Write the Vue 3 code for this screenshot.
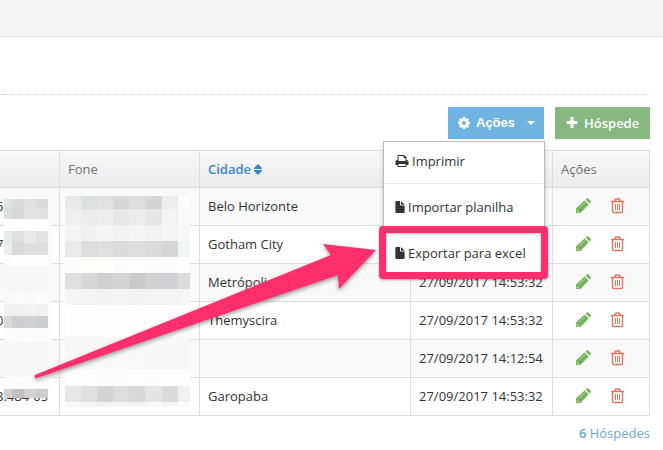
<script setup>
import { ref } from 'vue';

const menuOpen = ref(true); // dropdown state

const guests = [
    { doc: '6', city: 'Belo Horizonte', date: '27/09/2017 14:53:32' },
    { doc: '7', city: 'Gotham City', date: '27/09/2017 14:53:32' },
    { doc: '', city: 'Metrópolis', date: '27/09/2017 14:53:32' },
    { doc: '0', city: 'Themyscira', date: '27/09/2017 14:53:32' },
    { doc: '', city: '', date: '27/09/2017 14:12:54' },
    { doc: '8.484-05', city: 'Garopaba', date: '27/09/2017 14:53:32' },
];

// each band: [y, height, grey of every tile]
const docBands = [
    [49, 8, ['#e1e4e3', '#d9dadf', '#dfdfdf', '#dadada', '#f9f9f9']],
    [57, 12, ['#dddfdb', '#d8d8d8', '#e1e1e1', '#e0e0e0', '#f9f9f9']],
    [69, 12, ['#fff', '#fff', '#fff', '#fff', '#fafafa']],
    [81, 12, ['#e8ebea', '#dfdfdf', '#e9e9e9', '#e2e2e2', '#fafafa']],
    [93, 12, ['#ebeded', '#d9d9d9', '#dfdfdf', '#dfdfdf', '#fafafa']],
    [105, 12, ['#fdfdfd', '#fefefe', '#fefefe', '#fefefe', '#fafafa']],
    [117, 25, ['#f8f8f8', '#f8f8f8', '#f8f8f8', '#f8f8f8', '#f9f9f9']],
    [142, 12, ['#f9f9f9', '#fbfbfb', '#fafafa', '#fcfcfc', '#fafafa']],
    [154, 12, ['#f2f2f2', '#f0f0f0', '#f2f2f2', '#f1f1f1', '#fdfdfd']],
    [166, 12, ['#dadada', '#cccdcf', '#d1d1d1', '#cccdcf', '#fdfdfd']],
    [178, 13, ['#fdfdfd', '#fbfbfb', '#fcfcfc', '#fbfbfb', '#fdfdfd']],
    [191, 36, ['#f8f8f8', '#f8f8f8', '#f8f8f8', '#f8f8f8', '#f9f9f9']],
    [227, 12, ['#fdfdfd', '#fcfcfc', '#fcfcfc', '#fbfbfb', '#fdfdfd']],
    [239, 9, ['#d1d1d1', '#c0c0c0', '#d2d2d2', '#cdcdcd', '#fefefe']],
];

const phoneBands = [
    [46, 13, ['#e9e9e9', '#dde0df', '#e1e1e1', '#d7d7d7', '#dedede', '#d5d5d5', '#ededed', '#fdfdfd']],
    [59, 16, ['#f0f0f0', '#ebebeb', '#ededed', '#e7e7e7', '#ececec', '#e6e6e6', '#f4f4f4', '#fafafa']],
    [75, 16, ['#f4f4f4', '#f1f1f1', '#f5f5f5', '#f2f2f2', '#f5f5f5', '#f2f2f2', '#f5f5f5', '#f8f8f8']],
    [91, 16, ['#eaeaea', '#dddddd', '#dfdfdf', '#dadada', '#dedede', '#dadada', '#d6d6d6', '#f2f5f4']],
    [107, 16, ['#fcfcfc', '#fdfdfc', '#fefefd', '#fcfcfc', '#fdfdfd', '#fcfcfc', '#fcfcfc', '#fdfdfd']],
    [123, 16, ['#e0e0e0', '#d7d7d7', '#d0d0d0', '#d5d5d5', '#cacaca', '#d1d1d1', '#d0d0d4', '#dcdcdc']],
    [139, 16, ['#f5f5f5', '#f4f4f4', '#f3f3f3', '#f4f4f4', '#f3f3f3', '#f4f4f4', '#f4f4f4', '#f5f5f5']],
    [155, 32, ['#fefefe', '#fefefe', '#fefefe', '#fdfdfd', '#fefefe', '#fefefe', '#fefefe', '#fefefe']],
    [187, 17, ['#f8f8f8', '#f8f8f8', '#f8f8f8', '#f8f8f8', '#f8f8f8', '#f8f8f8', '#f8f8f8', '#f8f8f8']],
    [204, 16, ['#f9f9f9', '#f9f9f9', '#f9f9f9', '#f9f9f9', '#f9f9f9', '#f8f8f8', '#f8f8f8', '#f8f8f8']],
    [220, 16, ['#fdfdfd', '#fdfdfd', '#fcfcfc', '#fcfcfc', '#fdfdfd', '#fcfcfc', '#fdfdfd', '#fdfdfd']],
    [236, 16, ['#e7e7e7', '#dfdfdf', '#d4d4d4', '#dddddd', '#d8d8d8', '#e4e4e4', '#dadada', '#f0f0f0']],
    [252, 5, ['#f8f8f8', '#f5f5f5', '#f3f3f3', '#f6f6f6', '#f4f4f4', '#f8f8f8', '#f5f5f5', '#fbfbfb']],
];

const docTiles = toTiles(docBands, [4, 12, 24, 36, 48, 52]);
const phoneTiles = toTiles(phoneBands, [65, 81, 97, 113, 129, 145, 162, 178, 190]);

function toTiles(bands, edges) {
    return bands.flatMap(([y, height, fills]) =>
        fills.map((fill, i) => ({ x: edges[i], y, width: edges[i + 1] - edges[i], height, fill }))
    );
}
</script>

<template>
    <div class="page">
        <header class="topbar"></header>
        <main class="content">
            <!-- action buttons -->
            <div class="toolbar">
                <div class="dropdown">
                    <button type="button" class="btn btn-actions" :aria-expanded="menuOpen" @click="menuOpen = !menuOpen">
                        <svg class="icon" viewBox="0 0 1792 1792"><path d="M1152 896q0-106-75-181t-181-75-181 75-75 181 75 181 181 75 181-75 75-181zm512-109v222q0 12-8 23t-20 13l-185 28q-19 54-39 91 35 50 107 138 10 12 10 25t-9 23q-27 37-99 108t-94 71q-12 0-26-9l-138-108q-44 23-91 38-16 136-29 186-7 28-36 28h-222q-14 0-24.5-8.5t-11.5-21.5l-28-184q-49-16-90-37l-141 107q-10 9-25 9-14 0-25-11-126-114-165-168-7-10-7-23 0-12 8-23 15-21 51-66.5t54-70.5q-27-50-41-99l-183-27q-13-2-21-12.5t-8-23.5v-222q0-12 8-23t19-13l186-28q14-46 39-92-40-57-107-138-10-12-10-24 0-10 9-23 26-36 98.5-107.5t94.5-71.5q13 0 26 10l138 107q44-23 91-38 16-136 29-186 7-28 36-28h222q14 0 24.5 8.5t11.5 21.5l28 184q49 16 90 37l142-107q9-9 24-9 13 0 25 10 129 119 165 170 7 8 7 22 0 12-8 23-15 21-51 66.5t-54 70.5q26 50 41 98l183 28q13 2 21 12.5t8 23.5z" /></svg>
                        <span>Ações</span>
                        <span class="caret"></span>
                    </button>
                    <ul v-if="menuOpen" class="menu">
                        <li>
                            <a href="#">
                                <svg class="icon" viewBox="0 0 1792 1792"><path d="M448 1536h896v-256h-896v256zm0-640h896v-384h-160q-40 0-68-28t-28-68v-160h-640v640zm1152 64q0-26-19-45t-45-19-45 19-19 45 19 45 45 19 45-19 19-45zm128 0v416q0 13-9.5 22.5t-22.5 9.5h-224v160q0 40-28 68t-68 28h-960q-40 0-68-28t-28-68v-160h-224q-13 0-22.5-9.5t-9.5-22.5v-416q0-79 56.5-135.5t135.5-56.5h64v-544q0-40 28-68t68-28h672q40 0 88 20t76 48l152 152q28 28 48 76t20 88v256h64q79 0 135.5 56.5t56.5 135.5z" /></svg>
                                <span>Imprimir</span>
                            </a>
                        </li>
                        <li>
                            <a href="#">
                                <svg class="icon icon-file" viewBox="0 0 10 13"><path d="M0 1Q0 0 1 0H5V4Q5 5 6 5H10V12Q10 13 9 13H1Q0 13 0 12ZM6 0L10 4H6Z" /></svg>
                                <span>Importar planilha</span>
                            </a>
                        </li>
                        <li class="marked">
                            <a href="#">
                                <svg class="icon icon-file" viewBox="0 0 10 13"><path d="M0 1Q0 0 1 0H5V4Q5 5 6 5H10V12Q10 13 9 13H1Q0 13 0 12ZM6 0L10 4H6Z" /></svg>
                                <span>Exportar para excel</span>
                            </a>
                        </li>
                    </ul>
                </div>
                <button type="button" class="btn btn-add">
                    <svg class="icon" viewBox="0 0 1792 1792"><path d="M1600 736v192q0 40-28 68t-68 28h-416v416q0 40-28 68t-68 28h-192q-40 0-68-28t-28-68v-416h-416q-40 0-68-28t-28-68v-192q0-40 28-68t68-28h416v-416q0-40 28-68t68-28h192q40 0 68 28t28 68v416h416q40 0 68 28t28 68z" /></svg>
                    <span>Hóspede</span>
                </button>
            </div>

            <!-- guest list -->
            <div class="list">
                <table>
                    <colgroup>
                        <col class="col-doc" />
                        <col class="col-phone" />
                        <col />
                        <col class="col-date" />
                        <col class="col-actions" />
                    </colgroup>
                    <thead>
                        <tr>
                            <th></th>
                            <th>Fone</th>
                            <th>
                                <a href="#" class="sort">
                                    <span>Cidade</span>
                                    <svg viewBox="0 0 8 11"><path d="M4 0L8 4V5H0V4ZM0 6H8V7L4 11L0 7Z" /></svg>
                                </a>
                            </th>
                            <th></th>
                            <th>Ações</th>
                        </tr>
                    </thead>
                    <tbody>
                        <tr v-for="(guest, i) in guests" :key="i">
                            <td class="doc">{{ guest.doc }}</td>
                            <td></td>
                            <td>{{ guest.city }}</td>
                            <td>{{ guest.date }}</td>
                            <td>
                                <div class="row-actions">
                                    <button type="button" aria-label="Editar">
                                        <svg class="edit" viewBox="0 0 15 15">
                                            <path d="M0 15V10.6L8.6 2.4L12.6 6.4L4.4 15ZM9.6 1.5L10.7 0.5Q11.5 -0.2 12.3 0.5L14.5 2.7Q15.2 3.5 14.5 4.3L13.5 5.4Z" />
                                            <path class="shine" d="M3.2 10L9 4.4M1.2 11.8V13.8H3.2" />
                                        </svg>
                                    </button>
                                    <button type="button" aria-label="Excluir">
                                        <svg class="remove" viewBox="0 0 13 16">
                                            <path d="M0 3.5H13M3.5 3L4.2 1.5Q4.5 1 5 1H8Q8.5 1 8.8 1.5L9.5 3M1.5 4V13.5Q1.5 14.5 2.7 14.5H10.3Q11.5 14.5 11.5 13.5V4" />
                                            <path class="bars" d="M4.5 6V12M6.5 6V12M8.5 6V12" />
                                        </svg>
                                    </button>
                                </div>
                            </td>
                        </tr>
                    </tbody>
                </table>

                <!-- pixelated private data -->
                <svg class="mosaic" width="200" height="270" shape-rendering="crispEdges" aria-hidden="true">
                    <rect x="63" y="46" width="2" height="211" fill="#fbfbfb" />
                    <rect v-for="(tile, i) in docTiles" :key="'d' + i" v-bind="tile" />
                    <rect v-for="(tile, i) in phoneTiles" :key="'p' + i" v-bind="tile" />
                </svg>

                <!-- arrow to the export item -->
                <svg class="arrow" width="350" height="150" viewBox="30 240 350 150" aria-hidden="true">
                    <path d="M35 375L331 255L323 244L376 250L339 289L338 275L37 378Q34 379 35 375Z" />
                </svg>
            </div>
            <p class="total"><a href="#"><b>6</b> Hóspedes</a></p>
        </main>
    </div>
</template>

<style scoped>
.page {
    font-family: "Open Sans", "Noto Sans", sans-serif;
    font-size: 13px;
    line-height: 20px;
    color: #333;
    overflow: hidden;
}

a {
    color: inherit;
    text-decoration: none;
}

button {
    font: inherit;
    border: 0;
    cursor: pointer;
}

.icon {
    width: 14px;
    height: 14px;
    fill: currentColor;
    flex: none;
}

.topbar {
    height: 36px;
    background: #f4f4f4;
    border-bottom: 1px solid #e2e2e2;
}

.content {
    padding: 57px 13px 0 0;
}

.toolbar {
    display: flex;
    justify-content: flex-end;
    gap: 11px;
    padding: 12px 0 11px;
    border-top: 1px dotted #d8d8d8;
}

.btn {
    display: flex;
    align-items: center;
    gap: 5px;
    height: 32px;
    padding: 0 10px;
    color: #fff;
    font-weight: 600;
}

.btn-actions {
    width: 96px;
    padding: 0 9px;
    font-family: "Liberation Sans", Arial, sans-serif;
    font-weight: 700;
    background: #6fb3e0;
}

.btn-add {
    width: 95px;
    background: #87b87f;
}

.caret {
    margin-left: auto;
    border: 4px solid transparent;
    border-top-color: #fff;
    border-bottom: 0;
}

.dropdown {
    position: relative;
}

.menu {
    position: absolute;
    z-index: 2;
    top: 34px;
    right: -1px;
    box-sizing: border-box;
    width: 162px;
    margin: 0;
    padding: 0 1px;
    list-style: none;
    background: #fff;
    border: 1px solid #bbb;
    box-shadow: 0 2px 4px rgba(0, 0, 0, 0.2);
}

.menu li + li {
    border-top: 1px solid #e5e5e5;
}

.menu a {
    display: flex;
    align-items: center;
    gap: 3px;
    height: 45px;
    padding: 0 10px;
    white-space: nowrap;
}

.menu li:first-child a {
    height: 37px;
    padding-bottom: 4px;
}

.icon-file {
    width: 10px;
    height: 12px;
}

/* frame around the export item */
.marked {
    position: relative;
}

.marked::after {
    content: "";
    position: absolute;
    inset: -4px -5px -4px -6px;
    border: 7px solid #ff2f6d;
    border-radius: 4px;
    filter: drop-shadow(0 1px 1px rgba(0, 0, 0, 0.3));
    pointer-events: none;
}

.list {
    position: relative;
}

/* the table goes on past the left edge */
table {
    width: calc(100% + 4px);
    margin-left: -4px;
    table-layout: fixed;
    border-spacing: 0;
}

.col-doc {
    width: 64px;
}

.col-phone {
    width: 140px;
}

.col-date {
    width: 142px;
}

.col-actions {
    width: 97px;
}

th,
td {
    box-sizing: border-box;
    height: 38px;
    padding: 0 8px;
    text-align: left;
    white-space: nowrap;
    border: solid #ddd;
    border-width: 0 1px 1px 0;
}

td {
    padding-bottom: 2px;
}

th {
    color: #707070;
    font-weight: 500;
    border-top-width: 1px;
    background: linear-gradient(#f8f8f8, #ececec);
}

.doc {
    padding-left: 0;
    padding-right: 0;
}

tbody tr:nth-child(odd) {
    background: #f9f9f9;
}

.sort {
    display: flex;
    align-items: center;
    gap: 3px;
    color: #3a87c8;
    font-weight: 600;
}

.sort svg {
    width: 8px;
    height: 11px;
    fill: currentColor;
}

.row-actions {
    display: flex;
    align-items: center;
    gap: 20px;
    padding-left: 15px;
}

.row-actions button {
    display: flex;
    padding: 0;
    background: none;
}

.edit {
    width: 15px;
    height: 15px;
    fill: #74b257;
}

.shine {
    fill: none;
    stroke: #cfe5c4;
    stroke-width: 0.8;
}

.remove {
    width: 13px;
    height: 16px;
    fill: none;
    stroke: #e07560;
    stroke-width: 1.4;
}

.bars {
    stroke-width: 1;
}

.mosaic {
    position: absolute;
    top: 0;
    left: 0;
}

.arrow {
    position: absolute;
    z-index: 1;
    top: 90px;
    right: 270px;
    overflow: visible;
    fill: #ff2f6d;
    filter: drop-shadow(0 2px 2px rgba(0, 0, 0, 0.4));
    pointer-events: none;
}

.total {
    margin: 7px 0 0;
    text-align: right;
    color: #6fa8d6;
}

.total b {
    font-weight: 600;
}
</style>

<style>
body {
    margin: 0;
    background: #fff;
}
</style>
